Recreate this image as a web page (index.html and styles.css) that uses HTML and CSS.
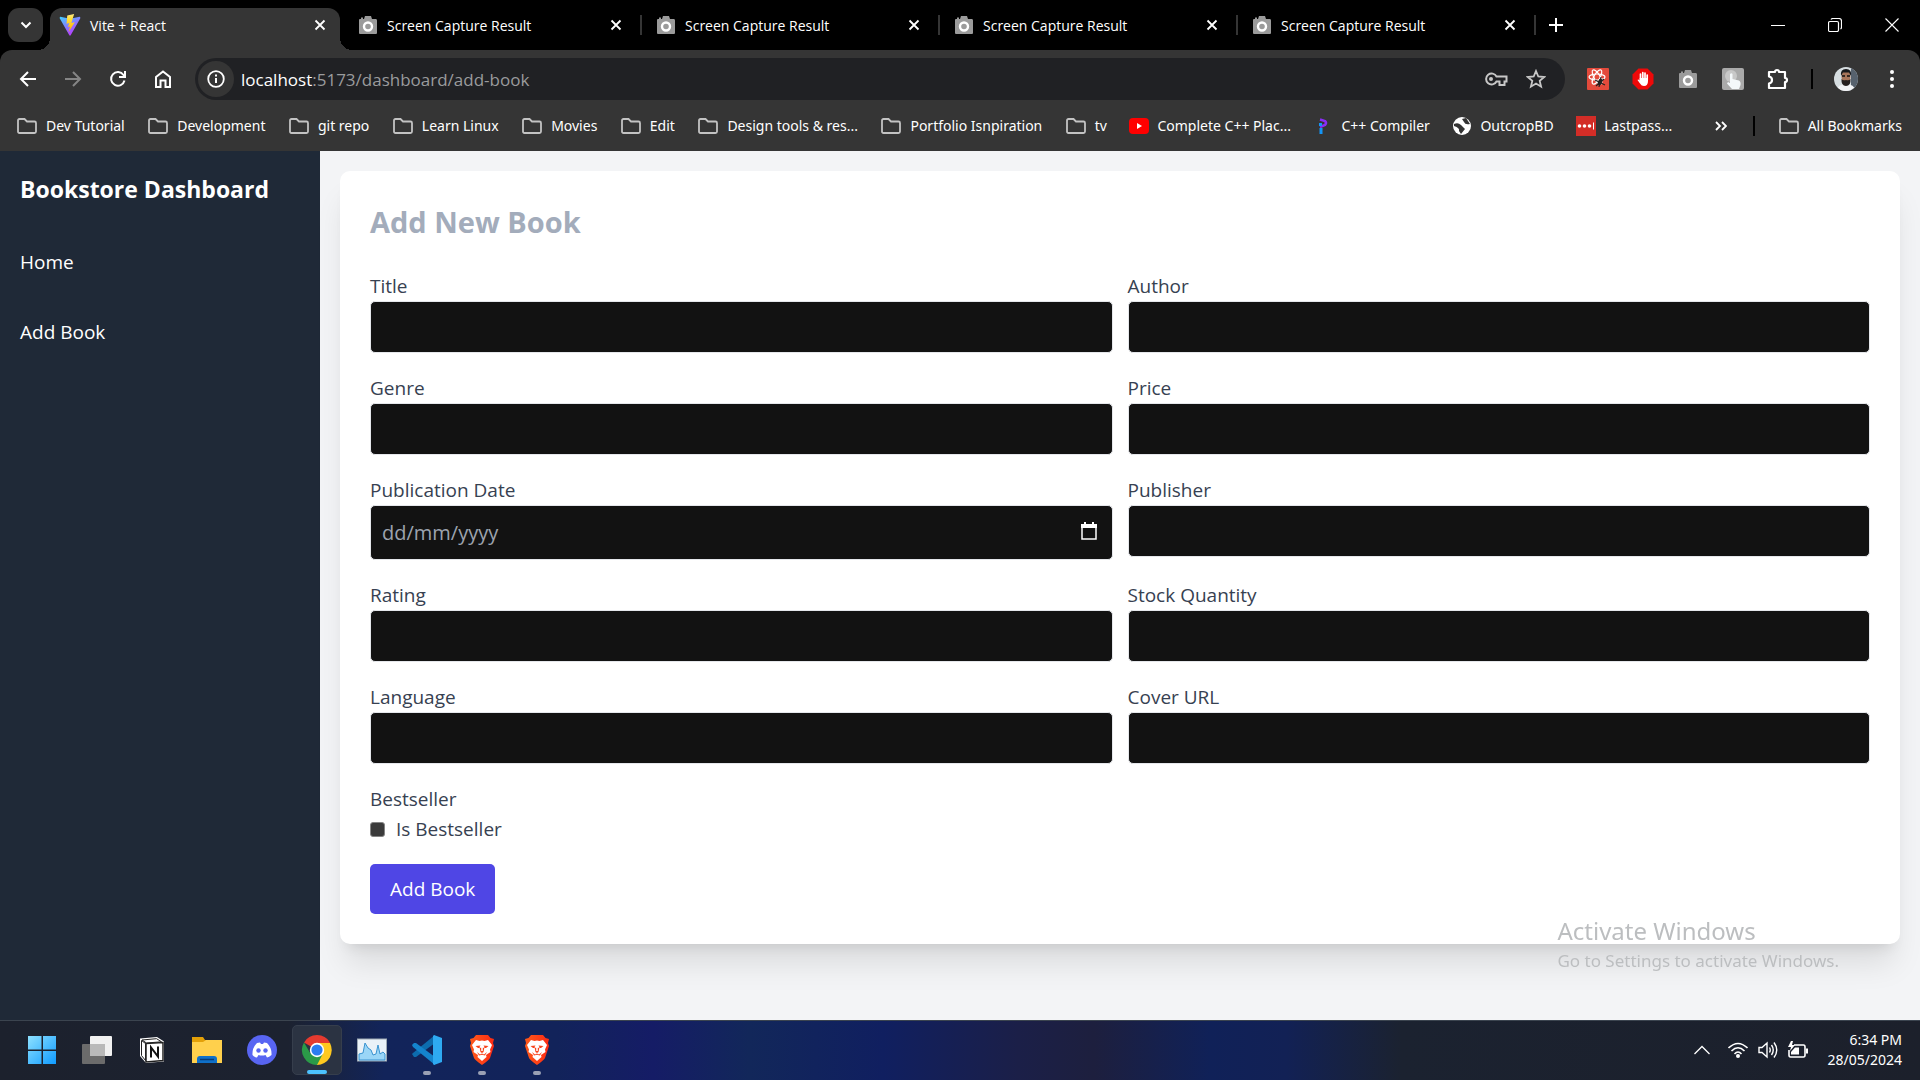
FILE: index.html
```html
<!DOCTYPE html>
<html lang="en">
<head>
<meta charset="utf-8">
<title>Vite + React</title>
<link rel="stylesheet" href="styles.css">
</head>
<body>
<svg class="defs" aria-hidden="true">
  <symbol id="folder" viewBox="0 0 22 18"><path d="M2 3.500Q2 2 3.500 2H8.500L11 4.500H18.500Q20 4.500 20 6V14.500Q20 16 18.500 16H3.500Q2 16 2 14.500Z" fill="none" stroke="#c3c3c3" stroke-width="1.800"/></symbol>
  <symbol id="camera" viewBox="0 0 20 20"><path d="M1.500 4H3V2.500H5V4H6L7 1H13L14 4H18Q19 4 19 5.500V18Q19 19 18 19H2Q1 19 1 18V5Z" fill="#9b9b9b"/><circle cx="10" cy="11.500" r="4" fill="#9b9b9b" stroke="#fff" stroke-width="2.400"/></symbol>
  <symbol id="x" viewBox="0 0 12 12"><path d="M1.500 1.500L10.500 10.500M10.500 1.500L1.500 10.500" stroke="#fff" stroke-width="1.800" fill="none"/></symbol>
  <symbol id="brave" viewBox="0 0 28 32"><path d="M8 1H20L22.500 4L26 5L25 9L26 12L22 24Q21 26 14 31Q7 26 6 24L2 12L3 9L2 5L5.500 4Z" fill="url(#braveFill)"/><path d="M8 6L11.500 7L14 6.500L16.500 7L20 6L24 11L22 15.500L22.500 18L18 21L18.500 23L14 27L9.500 23L10 21L5.500 18L6 15.500L4 11Z" fill="#fff"/><path d="M7.500 12L12.500 11.500L11.500 13L12.500 18L14 19L15.500 18L16.500 13L15.500 11.500L20.500 12L18 14L14.800 13.800V17H13.200V13.800L10 14ZM9 18L12 20.500L14 19.500L16 20.500L19 18L17 21.500L14 20.800L11 21.500Z" fill="#f8431b"/></symbol>
  <linearGradient id="braveFill"><stop stop-color="#ff5a1a"/><stop offset="1" stop-color="#fb2a14"/></linearGradient>
</svg>

<header class="browser">
  <div class="tabs">
    <button class="tab-search" aria-label="Search tabs"><svg width="12" height="8" viewBox="0 0 12 8"><path d="M1.500 1.500L6 6L10.500 1.500" fill="none" stroke="#fff" stroke-width="2"/></svg></button>
    <div class="tab tab-active">
      <svg width="22" height="22" viewBox="0 0 32 32"><defs><linearGradient id="va" x1="0" y1="0" x2=".6" y2="1"><stop stop-color="#41d1ff"/><stop offset="1" stop-color="#bd34fe"/></linearGradient><linearGradient id="vb" x1="0" y1="0" x2="0" y2="1"><stop stop-color="#ffea83"/><stop offset=".3" stop-color="#ffdd35"/><stop offset="1" stop-color="#ffa800"/></linearGradient></defs><path d="M31 6L17 31Q16 32 15 31L1 6Q1 4 2 4L16 7L30 4Q31 4 31 6Z" fill="url(#va)"/><path d="M22 0L12 2L11 14L15 13L13 19L16 18L14 26L23 12L18 13Z" fill="url(#vb)"/></svg>
      <span class="tab-name">Vite + React</span>
      <button class="tab-close" aria-label="Close tab"><svg width="12" height="12"><use href="#x"/></svg></button>
    </div>
    <div class="tab"><svg width="20" height="20"><use href="#camera"/></svg><span class="tab-name">Screen Capture Result</span><button class="tab-close" aria-label="Close tab"><svg width="12" height="12"><use href="#x"/></svg></button></div>
    <div class="tab"><svg width="20" height="20"><use href="#camera"/></svg><span class="tab-name">Screen Capture Result</span><button class="tab-close" aria-label="Close tab"><svg width="12" height="12"><use href="#x"/></svg></button></div>
    <div class="tab"><svg width="20" height="20"><use href="#camera"/></svg><span class="tab-name">Screen Capture Result</span><button class="tab-close" aria-label="Close tab"><svg width="12" height="12"><use href="#x"/></svg></button></div>
    <div class="tab"><svg width="20" height="20"><use href="#camera"/></svg><span class="tab-name">Screen Capture Result</span><button class="tab-close" aria-label="Close tab"><svg width="12" height="12"><use href="#x"/></svg></button></div>
    <button class="tab-new" aria-label="New tab"><svg width="14" height="14" viewBox="0 0 14 14"><path d="M7 0V14M0 7H14" stroke="#fff" stroke-width="2"/></svg></button>
    <div class="window-buttons">
      <button aria-label="Minimize"><svg width="14" height="14" viewBox="0 0 14 14"><path d="M0 7.500H14" stroke="#fff"/></svg></button>
      <button aria-label="Restore"><svg width="14" height="14" viewBox="0 0 14 14"><path d="M.5 5Q.5 3.500 2 3.500H9Q10.500 3.500 10.500 5V12Q10.500 13.500 9 13.500H2Q.5 13.500 .5 12ZM3 1.500Q3.500.5 5 .5H11Q13.500.5 13.500 3V9Q13.500 10.500 12.500 11" fill="none" stroke="#fff" stroke-width="1.200"/></svg></button>
      <button aria-label="Close"><svg width="14" height="14" viewBox="0 0 14 14"><path d="M.5.5L13.500 13.500M13.500.5L.5 13.500" stroke="#fff" stroke-width="1.100"/></svg></button>
    </div>
  </div>

  <div class="toolbar">
    <div class="nav-buttons">
      <button aria-label="Back"><svg width="18" height="18" viewBox="0 0 18 18"><path d="M17 9H2M9 2L2 9L9 16" fill="none" stroke="#fff" stroke-width="2"/></svg></button>
      <button aria-label="Forward"><svg width="18" height="18" viewBox="0 0 18 18"><path d="M1 9H16M9 2L16 9L9 16" fill="none" stroke="#858585" stroke-width="2"/></svg></button>
      <button aria-label="Reload"><svg width="18" height="18" viewBox="0 0 18 18"><path d="M15.500 10.500A6.800 6.800 0 1 1 14.500 5L16 7" fill="none" stroke="#fff" stroke-width="2"/><path d="M17 1V8H10V6H15V1Z" fill="#fff"/></svg></button>
      <button aria-label="Home"><svg width="18" height="18" viewBox="0 0 18 18"><path d="M2 7L9 1.500L16 7V17H11.500V10.500H6.500V17H2Z" fill="none" stroke="#fff" stroke-width="2"/></svg></button>
    </div>
    <div class="omnibox">
      <button class="site-info" aria-label="Site information"><svg width="18" height="18" viewBox="0 0 18 18"><circle cx="9" cy="9" r="7.800" fill="none" stroke="#fff" stroke-width="1.800"/><path d="M9 8V13M9 4.500V6.500" stroke="#fff" stroke-width="2"/></svg></button>
      <div class="url"><b>localhost</b>:5173/dashboard/add-book</div>
      <button aria-label="Passwords"><svg width="24" height="18" viewBox="0 0 24 18"><path d="M12.500 6.500H22.500V11.500H20.500V15H15.500V11.500H12.500A5.500 5.500 0 1 1 12.500 6.500Z" fill="none" stroke="#c7c7c7" stroke-width="2"/><circle cx="7" cy="9" r="2" fill="#c7c7c7"/></svg></button>
      <button aria-label="Bookmark this page"><svg width="20" height="20" viewBox="0 0 20 20"><path d="M10 2L12.300 7.500L18.200 8L13.700 11.900L15.100 17.700L10 14.600L4.900 17.700L6.300 11.900L1.800 8L7.700 7.500Z" fill="none" stroke="#c7c7c7" stroke-width="1.800"/></svg></button>
    </div>
    <div class="extensions">
      <button aria-label="React tools"><svg width="22" height="22" viewBox="0 0 22 22"><rect width="22" height="22" rx="1" fill="#e34a3b"/><g fill="none" stroke="#fff" stroke-width="1.200"><ellipse cx="10" cy="9" rx="8" ry="3"/><ellipse cx="10" cy="9" rx="8" ry="3" transform="rotate(60 10 9)"/><ellipse cx="10" cy="9" rx="8" ry="3" transform="rotate(120 10 9)"/></g><ellipse cx="13" cy="14" rx="2" ry="3.500" fill="#222" transform="rotate(20 13 14)"/><path d="M8 12L18 17M17 11L9 18M14 9L12 19" stroke="#222" stroke-width="1.200"/></svg></button>
      <button aria-label="Ad blocker"><svg width="22" height="22" viewBox="0 0 22 22"><path d="M6.500.5H15.500L21.500 6.500V15.500L15.500 21.500H6.500L.5 15.500V6.500Z" fill="#ee0909"/><path d="M8.500 12V6M10.800 11V4.500M13 11V5M15.200 12V7" stroke="#fff" stroke-width="1.700" stroke-linecap="round"/><path d="M7.700 10H16V13Q16 18 12 18Q9.500 18 8 15.500L5.500 12Q6 11 7.700 12.500Z" fill="#fff"/></svg></button>
      <button aria-label="Screen capture"><svg width="20" height="20"><use href="#camera"/></svg></button>
      <button aria-label="Click recorder"><svg width="22" height="22" viewBox="0 0 22 22"><rect width="22" height="22" rx="2" fill="#aaa"/><circle cx="9" cy="8" r="6" fill="#c8c8c8"/><path d="M8 6Q9.500 4.500 10.500 6V11L17 12.500Q19 13.500 18.500 17L17 21H10L5 15.500L6 14L8 15Z" fill="#f4f8fa"/></svg></button>
      <button aria-label="Extensions"><svg width="22" height="22" viewBox="0 0 22 22"><path d="M2 4H8A2 2 0 0 1 12 4H18V10A2 2 0 0 1 18 14V20H2V15.500Q5 15 5 12T2 8.500Z" fill="none" stroke="#fff" stroke-width="2.200" stroke-linejoin="round"/></svg></button>
    </div>
    <span class="divider"></span>
    <button class="avatar" aria-label="Profile"><svg width="24" height="24" viewBox="0 0 24 24"><defs><clipPath id="face"><circle cx="12" cy="12" r="12"/></clipPath></defs><g clip-path="url(#face)"><rect width="24" height="24" fill="#d6dde0"/><path d="M17 0H24V24H17Z" fill="#56616d"/><path d="M2 24Q4 17 12 17T22 24Z" fill="#f2f3f5"/><ellipse cx="12" cy="10" rx="4.500" ry="7" fill="#a8755a"/><path d="M7 9Q6 2 12 2T17 9L15 5.500H9Z" fill="#17181b"/><path d="M7.500 12Q9 14 12 13Q15 14 16.500 12Q17 19 12 19T7.500 12Z" fill="#25201f"/><path d="M8 9H11M13 9H16" stroke="#111" stroke-width="1.500"/></g></svg></button>
    <button class="menu" aria-label="Menu"><svg width="4" height="18" viewBox="0 0 4 18"><g fill="#fff"><circle cx="2" cy="2" r="2"/><circle cx="2" cy="9" r="2"/><circle cx="2" cy="16" r="2"/></g></svg></button>
  </div>

  <nav class="bookmarks">
    <a href="#"><svg width="22" height="18"><use href="#folder"/></svg>Dev Tutorial</a>
    <a href="#"><svg width="22" height="18"><use href="#folder"/></svg>Development</a>
    <a href="#"><svg width="22" height="18"><use href="#folder"/></svg>git repo</a>
    <a href="#"><svg width="22" height="18"><use href="#folder"/></svg>Learn Linux</a>
    <a href="#"><svg width="22" height="18"><use href="#folder"/></svg>Movies</a>
    <a href="#"><svg width="22" height="18"><use href="#folder"/></svg>Edit</a>
    <a href="#"><svg width="22" height="18"><use href="#folder"/></svg>Design tools &amp; res...</a>
    <a href="#"><svg width="22" height="18"><use href="#folder"/></svg>Portfolio Isnpiration</a>
    <a href="#"><svg width="22" height="18"><use href="#folder"/></svg>tv</a>
    <a href="#"><svg width="20" height="20" viewBox="0 0 20 20"><rect y="2" width="20" height="16" rx="4" fill="#f00"/><path d="M8 7L13 10L8 13Z" fill="#fff"/></svg>Complete C++ Plac...</a>
    <a href="#"><svg width="20" height="20" viewBox="0 0 20 20"><path d="M7 3.500L12 5Q14 7 12 9L7 11" fill="none" stroke="#8a2df5" stroke-width="2.500"/><path d="M7.500 7V10M8 12V18" stroke="#1495f5" stroke-width="3"/></svg>C++ Compiler</a>
    <a href="#"><svg width="20" height="20" viewBox="0 0 20 20"><circle cx="10" cy="10" r="9" fill="#fff"/><path d="M2 8Q6 6 9 9T13 13L9 18L7 15Q8 12 2 10ZM10 3L14 2L18 8Q13 9 12 6Z" fill="#333"/></svg>OutcropBD</a>
    <a href="#"><svg width="20" height="20" viewBox="0 0 20 20"><path d="M0 0H20V20H0Z" fill="#d32d27"/><g fill="#fff"><circle cx="3.500" cy="10" r="1.800"/><circle cx="8.500" cy="10" r="1.800"/><circle cx="13.500" cy="10" r="1.800"/><path d="M17 6.500H18V13.500H17Z"/></g></svg>Lastpass...</a>
    <button class="more" aria-label="More bookmarks"><svg width="12" height="10" viewBox="0 0 12 10"><path d="M1 1L5 5L1 9M7 1L11 5L7 9" fill="none" stroke="#fff" stroke-width="1.800"/></svg></button>
    <span class="divider"></span>
    <a href="#"><svg width="22" height="18"><use href="#folder"/></svg>All Bookmarks</a>
  </nav>
</header>

<div class="page">
  <aside class="sidebar">
    <h2 class="brand">Bookstore Dashboard</h2>
    <nav class="links"><a href="#">Home</a><a href="#">Add Book</a></nav>
  </aside>
  <main class="content">
    <form class="card">
      <h1 class="heading">Add New Book</h1>
      <div class="fields">
        <div class="field"><label for="title">Title</label><input id="title" type="text"></div>
        <div class="field"><label for="author">Author</label><input id="author" type="text"></div>
        <div class="field"><label for="genre">Genre</label><input id="genre" type="text"></div>
        <div class="field"><label for="price">Price</label><input id="price" type="text"></div>
        <div class="field"><label for="date">Publication Date</label>
          <div class="date"><input id="date" type="text" placeholder="dd/mm/yyyy"><button type="button" aria-label="Open calendar"><svg width="16" height="18" viewBox="0 0 16 18"><path d="M1 3.500H15V17H1Z" fill="none" stroke="#fff" stroke-width="1.500"/><path d="M0 2H16V6H0ZM3 0H5V3H3ZM11 0H13V3H11Z" fill="#fff"/></svg></button></div></div>
        <div class="field"><label for="publisher">Publisher</label><input id="publisher" type="text"></div>
        <div class="field"><label for="rating">Rating</label><input id="rating" type="text"></div>
        <div class="field"><label for="stock">Stock Quantity</label><input id="stock" type="text"></div>
        <div class="field"><label for="language">Language</label><input id="language" type="text"></div>
        <div class="field"><label for="cover">Cover URL</label><input id="cover" type="text"></div>
        <div class="field"><span>Bestseller</span><label class="check"><input type="checkbox">Is Bestseller</label></div>
      </div>
      <button class="submit" type="button">Add Book</button>
    </form>
  </main>
</div>

<footer class="taskbar">
  <div class="apps">
    <button aria-label="Start"><svg width="32" height="32" viewBox="0 0 32 32"><defs><linearGradient id="win" x1="0" y1="0" x2="1" y2="1"><stop stop-color="#8ee1ff"/><stop offset="1" stop-color="#0f9bff"/></linearGradient></defs><path d="M2 2H15.500V15.500H2ZM17 2H30V15.500H17ZM2 17H15.500V30H2ZM17 17H30V30H17Z" fill="url(#win)"/></svg></button>
    <button aria-label="Task view"><svg width="32" height="32" viewBox="0 0 32 32"><rect x="1" y="10" width="23" height="20" rx="1" fill="#6b6b6b"/><rect x="9" y="2" width="22" height="20" rx="1" fill="#f1f1f1"/><path d="M9 10H24V22H9Z" fill="#b9b9b9"/></svg></button>
    <button aria-label="Notion"><svg width="32" height="32" viewBox="0 0 32 32"><path d="M4 4.500L21 3L28 7.500V27.500L10 29L4 22Z" fill="#fff"/><path d="M5.500 6.500L9.500 9.500V26.500L5.500 21.500Z" fill="#fff" stroke="#222"/><path d="M6 6L20.500 4.700L25.500 7.800L10.500 9Z" fill="#fff" stroke="#222"/><path d="M10 9.500L27 8.500V26.500L10 28Z" fill="#fff" stroke="#222" stroke-width="1.500"/><path d="M15 23.500V13.500L22 22.500V12.500" fill="none" stroke="#111" stroke-width="2"/></svg></button>
    <button aria-label="File Explorer"><svg width="32" height="32" viewBox="0 0 32 32"><path d="M1 3H12L14 6H31V16H1Z" fill="#e3a008"/><path d="M1 8H12L15 6H31V29H1Z" fill="#ffd04c"/><path d="M6 29V25Q6 22 9 22H23Q26 22 26 25V29Z" fill="#0f70c9"/><path d="M9 25.500H23" stroke="#063b76" stroke-width="1.500"/></svg></button>
    <button aria-label="Discord"><svg width="32" height="32" viewBox="0 0 32 32"><circle cx="16" cy="16" r="15" fill="#5865f2"/><path d="M11 9L14 8.500L15 10H17L18 8.500L21 9Q26 14 25.500 21Q23 23 21 23.500L19.500 21Q16 22 12.500 21L11 23.500Q8 23 6.500 21Q6 14 11 9Z" fill="#fff"/><circle cx="12.500" cy="16.500" r="2.200" fill="#5865f2"/><circle cx="19.500" cy="16.500" r="2.200" fill="#5865f2"/></svg></button>
    <button class="current" aria-label="Chrome"><svg width="32" height="32" viewBox="0 0 32 32"><path d="M16 16L3 8.500A15 15 0 0 1 29 8.500Z" fill="#e53a2f"/><path d="M16 9H29A15 15 0 0 1 16 31L14 20Z" fill="#ffc91f"/><path d="M3 8.500L9.500 19.500L16 23L22 19.500L16 31A15 15 0 0 1 3 8.500Z" fill="#2b9a48"/><circle cx="16" cy="16" r="7.200" fill="#fff"/><circle cx="16" cy="16" r="5.600" fill="#2b7cf0"/></svg></button>
    <button aria-label="Resource monitor"><svg width="32" height="32" viewBox="0 0 32 32"><rect x="1.500" y="5" width="29" height="22" fill="#eaf2f8" stroke="#9da9b4"/><path d="M3 20L7 19L9 9L12 14L15 16L17 21L20 20L22 11L24 20L27 18L29 20V26H3Z" fill="#9ad6f7" stroke="#3993d0"/></svg></button>
    <button class="open" aria-label="Visual Studio Code"><svg width="32" height="32" viewBox="0 0 32 32"><path d="M1 20L3 23H5L24 9V1L2 19Z" fill="#0d6cae"/><path d="M1 11L3 9H5L24 23V31L2 13Z" fill="#1484cd"/><path d="M23 1L31 4V28L23 31L22 30V2Z" fill="#2eaaf2"/></svg></button>
    <button class="open" aria-label="Brave"><svg width="28" height="32"><use href="#brave"/></svg></button>
    <button class="open" aria-label="Brave"><svg width="28" height="32"><use href="#brave"/></svg></button>
  </div>
  <div class="tray">
    <svg class="chevron" width="16" height="10" viewBox="0 0 16 10"><path d="M.5 9L8 1.500L15.500 9" fill="none" stroke="#fff" stroke-width="1.300"/></svg>
    <svg width="20" height="18" viewBox="0 0 20 18"><g fill="none" stroke="#fff" stroke-width="1.600"><path d="M.5 7Q10-2 19.500 7M3.500 10Q10 3.500 16.500 10M6.500 13Q10 9 13.500 13"/></g><circle cx="10" cy="15" r="2" fill="#fff"/></svg>
    <svg width="20" height="18" viewBox="0 0 20 18"><g fill="none" stroke="#fff" stroke-width="1.400"><path d="M1 6.500H4L9 2V16L4 11.500H1ZM11.500 6.500Q13 9 11.500 11.500M13.500 4Q17 9 13.500 14M16 1.500Q21.500 9 16 16.500"/></g></svg>
    <svg width="20" height="18" viewBox="0 0 20 18"><path d="M6 4H15.500Q17 4 17 6V14Q17 16 15.500 16H2.500Q1 16 1 14V9" fill="none" stroke="#fff" stroke-width="1.600"/><path d="M7 6.500H11V13.500H3V11ZM18 7.500H20V12.500H18ZM3 0L0 6H3L2 10L7 4H4L5 0Z" fill="#fff"/></svg>
    <div class="clock"><span>6:34 PM</span><span>28/05/2024</span></div>
  </div>
</footer>

<div class="watermark"><span class="watermark-title">Activate Windows</span><span>Go to Settings to activate Windows.</span></div>
</body>
</html>
```
FILE: styles.css
```css
* { box-sizing: border-box; }
body { margin: 0; min-height: 100vh; display: flex; flex-direction: column; font-family: "Open Sans", "Noto Sans", sans-serif; font-size: 19px; }
button { margin: 0; padding: 0; border: 0; background: none; font: inherit; display: flex; align-items: center; justify-content: center; }
a { color: inherit; text-decoration: none; }
svg { display: block; flex: none; }
.defs { position: absolute; width: 0; height: 0; }

.browser { background: #000; color: #fff; font-size: 14px; }
.tabs { height: 50px; display: flex; align-items: center; padding-left: 8px; }
.tab-search { width: 35px; height: 34px; margin-right: 7px; border-radius: 11px; background: #353535; }
.tab { width: 298px; height: 42px; padding: 0 20px 0 14px; display: flex; align-items: center; gap: 9px; position: relative; }
.tab + .tab:not(.tab-active)::after { content: ""; position: absolute; right: 0; top: 11px; width: 2px; height: 20px; background: #353535; }
.tab-active { width: 290px; align-self: flex-end; margin-right: 4px; padding: 0 14px 8px 9px; border-radius: 12px 12px 0 0; background: #353535; }
.tab-active::before, .tab-active::after { content: ""; position: absolute; bottom: 0; width: 12px; height: 12px; }
.tab-active::before { left: -12px; background: radial-gradient(circle at 0 0, transparent 12px, #353535 12px); }
.tab-active::after { right: -12px; background: radial-gradient(circle at 100% 0, transparent 12px, #353535 12px); }
.tab-name { flex: 1; white-space: nowrap; }
.tab-new { width: 40px; height: 34px; }
.window-buttons { display: flex; margin-left: auto; }
.window-buttons button { width: 57px; height: 48px; }

.toolbar { height: 58px; padding: 0 24px 0 10px; display: flex; align-items: center; background: #353535; border-radius: 12px 12px 0 0; }
.nav-buttons { display: flex; gap: 9px; margin-right: 14px; }
.nav-buttons button { width: 36px; height: 36px; }
.omnibox { flex: 1; height: 42px; padding: 0 19px 0 3px; display: flex; align-items: center; gap: 18px; border-radius: 21px; background: #202124; font-size: 17px; color: #9a9b9d; }
.site-info { width: 36px; height: 36px; margin-right: -11px; border-radius: 18px; background: #353535; }
.url { flex: 1; white-space: nowrap; }
.url b { font-weight: 400; color: #fff; }
.extensions { display: flex; gap: 9px; margin: 0 15px; }
.extensions button { width: 36px; height: 36px; }
.divider { width: 2px; height: 20px; background: #000; }
.avatar { margin: 0 30px 0 21px; }
.menu { width: 8px; height: 36px; }

.bookmarks { height: 43px; padding: 0 18px 8px 16px; display: flex; align-items: center; justify-content: space-between; background: #353535; font-family: "Noto Sans", "Open Sans", sans-serif; }
.bookmarks a { display: flex; align-items: center; gap: 8px; white-space: nowrap; }
.more { width: 20px; height: 20px; margin-left: 16px; }

.page { flex: 1; display: flex; background: #f3f4f6; }
.sidebar { width: 320px; padding: 20px; background: #1f2937; color: #fff; }
.brand { margin: 0 0 30px; font-size: 23px; line-height: 36px; white-space: nowrap; }
.links { display: flex; flex-direction: column; gap: 20px; }
.links a { padding: 10px 0; line-height: 30px; }
.content { flex: 1; padding: 20px; }
.card { padding: 30px; border-radius: 10px; background: #fff; color: #374151; box-shadow: 0 25px 31px -6px rgba(0, 0, 0, .1), 0 10px 13px -8px rgba(0, 0, 0, .1); }
.heading { margin: 0 0 28px; font-size: 29px; line-height: 42px; color: #a3acbb; }
.fields { display: grid; grid-template-columns: 1fr 1fr; gap: 20px 15px; margin-bottom: 20px; line-height: 30px; }
.field { display: flex; flex-direction: column; }
.field input[type="text"] { width: 100%; height: 52px; padding: 0 11px; border: 1px solid #e5e7eb; border-radius: 5px; background: #121212; color: #fff; font: inherit; }
.field .date input[type="text"] { display: block; height: 55px; font-size: 20px; }
.date { position: relative; }
.date input::placeholder { color: #9ca3af; opacity: 1; }
.date button { position: absolute; right: 16px; top: 17px; }
.check { display: flex; align-items: center; gap: 11px; }
.check input { appearance: none; width: 15px; height: 15px; margin: 0; border: 1px solid #858585; border-radius: 3px; background: #3b3b3b; }
.submit { padding: 10px 20px; border-radius: 5px; background: #4f46e5; color: #fff; line-height: 30px; }

.taskbar { height: 60px; padding: 0 18px 2px 17px; display: flex; align-items: center; justify-content: space-between; border-top: 1px solid #3b444f; background: linear-gradient(90deg, #1c212d 0, #1c2230 15%, #12245a 20%, #12235a 29%, #151c66 34%, #12275a 39%, #101f60 46%, #1b1f48 53%, #1d1f3e 57%, #102158 63%, #122155 67%, #1b2230 73%, #1c202b 100%); color: #fff; }
.apps { display: flex; gap: 5px; }
.apps button { width: 50px; height: 50px; border-radius: 5px; position: relative; }
.apps .current { background: #2b3342; border: 1px solid #363e4c; }
.apps .current::after, .apps .open::after { content: ""; position: absolute; bottom: 0; width: 8px; height: 4px; border-radius: 2px; background: #9aa0b4; }
.apps .current::after { width: 20px; background: #4cc2ff; }
.tray { display: flex; align-items: center; gap: 10px; }
.chevron { margin-right: 8px; }
.clock { display: flex; flex-direction: column; align-items: flex-end; margin-left: 10px; font-family: "Noto Sans", "Open Sans", sans-serif; font-size: 14px; line-height: 20px; }
.watermark { position: fixed; right: 81px; bottom: 105px; display: flex; flex-direction: column; color: #bcbec0; font-family: "Noto Sans", "Open Sans", sans-serif; font-size: 17px; line-height: 28px; }
.watermark-title { font-size: 24px; line-height: 32px; }
```
